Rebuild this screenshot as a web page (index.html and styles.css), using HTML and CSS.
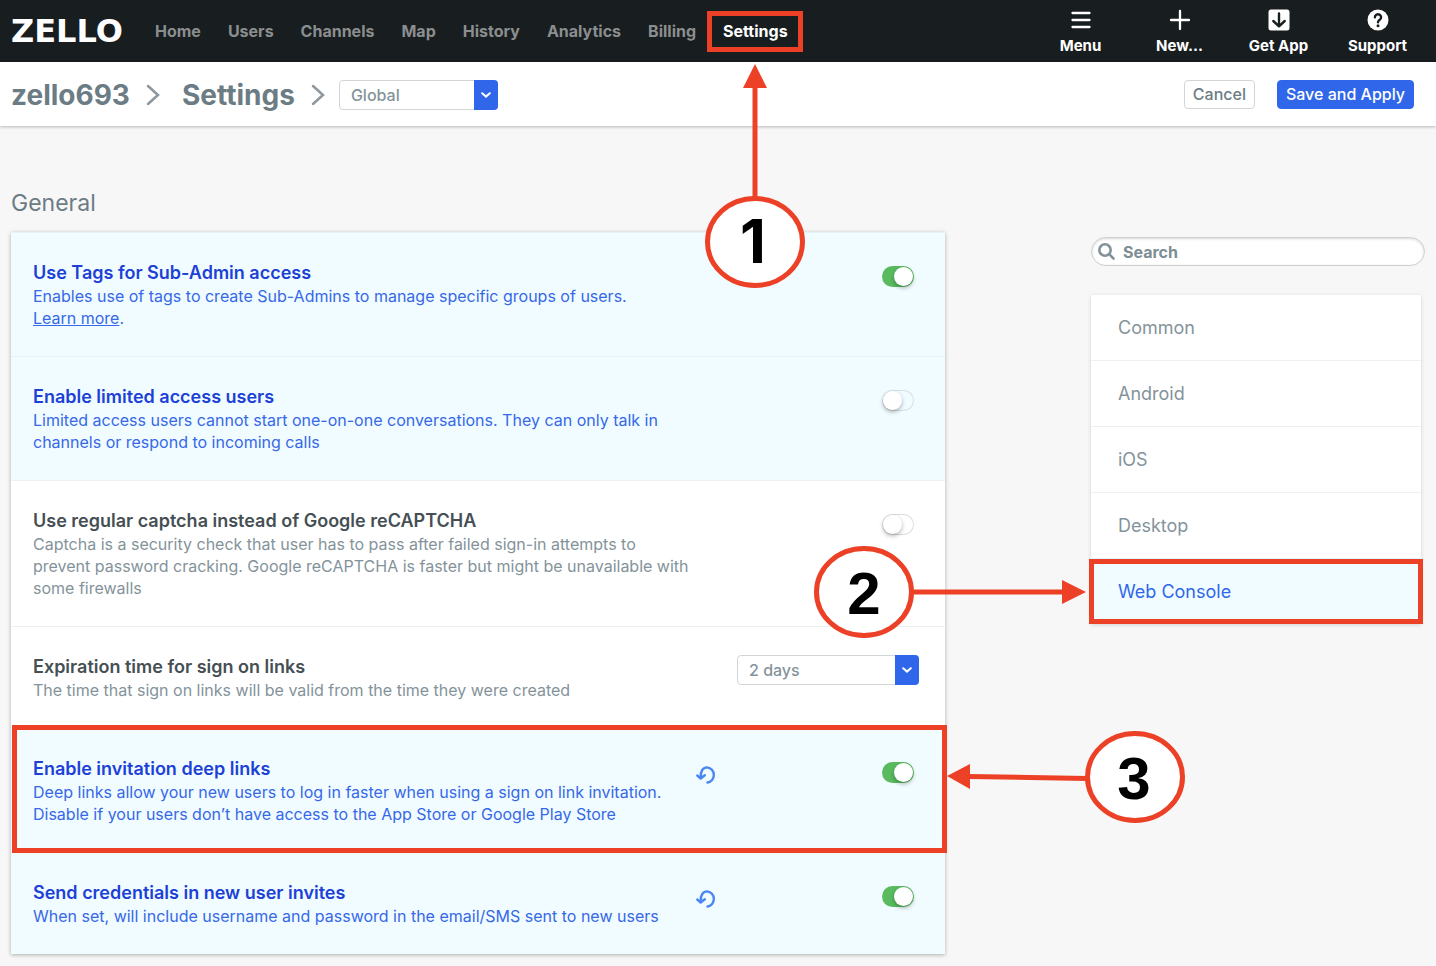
FILE: index.html
```html
<!DOCTYPE html>
<html lang="en">
<head>
    <meta charset="UTF-8">
    <meta name="viewport" content="width=device-width, initial-scale=1.0">
    <title>Zello - Settings</title>
    <link rel="stylesheet" href="styles.css">
</head>
<body>

<header class="topbar">
    <a class="logo" href="#">ZELLO</a>
    <nav class="main-nav">
        <ul>
            <li><a href="#">Home</a></li>
            <li><a href="#">Users</a></li>
            <li><a href="#">Channels</a></li>
            <li><a href="#">Map</a></li>
            <li><a href="#">History</a></li>
            <li><a href="#">Analytics</a></li>
            <li><a href="#">Billing</a></li>
            <li class="active">
                <a href="#">Settings</a>
                <div class="mark mark-nav">
                    <svg class="callout" width="102" height="238" viewBox="0 0 102 238">
                        <path class="head" d="M51 12 L63 36 L39 36 Z"/>
                        <path class="shaft" d="M51 35 V148"/>
                        <ellipse cx="51" cy="190" rx="47.500" ry="43.500"/>
                        <text class="one" x="49" y="211">1</text>
                    </svg>
                </div>
            </li>
        </ul>
    </nav>
    <nav class="tools">
        <a href="#">
            <svg width="22" height="22" viewBox="0 0 22 22"><path d="M2.500 4H19.500M2.500 11H19.500M2.500 18H19.500" stroke="#fff" stroke-width="2.300" stroke-linecap="round"/></svg>
            Menu
        </a>
        <a href="#">
            <svg width="22" height="22" viewBox="0 0 22 22"><path d="M2 11H20M11 2V20" stroke="#fff" stroke-width="2.300" stroke-linecap="round"/></svg>
            New...
        </a>
        <a href="#">
            <svg width="22" height="22" viewBox="0 0 22 22"><rect x="0.500" y="0.500" width="21" height="21" rx="2.500" fill="#fff"/><path d="M11 4.500V17M5.300 12L11 17.300L16.700 12" fill="none" stroke="#181d1f" stroke-width="2.400" stroke-linecap="round" stroke-linejoin="round"/></svg>
            Get App
        </a>
        <a href="#">
            <svg width="22" height="22" viewBox="0 0 22 22"><circle cx="11" cy="11" r="10.500" fill="#fff"/><path d="M7.900 8.400A3.100 3 0 1 1 12.700 10.800C11.500 11.600 11 12 11 13.300" fill="none" stroke="#181d1f" stroke-width="2.400" stroke-linecap="round"/><circle cx="11" cy="16.700" r="1.500" fill="#181d1f"/></svg>
            Support
        </a>
    </nav>
</header>

<div class="subheader">
    <div class="crumbs">
        <a href="#">zello693</a>
        <svg width="14" height="22" viewBox="0 0 14 22"><path d="M2 2L12 11L2 20"/></svg>
        <h1>Settings</h1>
        <svg width="14" height="22" viewBox="0 0 14 22"><path d="M2 2L12 11L2 20"/></svg>
        <div class="select scope">
            <select aria-label="Scope">
                <option>Global</option>
            </select>
            <span class="arrow"><svg width="10" height="6" viewBox="0 0 10 6"><path d="M1.200 1.200L5 4.600L8.800 1.200"/></svg></span>
        </div>
    </div>
    <div class="actions">
        <button class="btn" type="button">Cancel</button>
        <button class="btn primary" type="submit">Save and Apply</button>
    </div>
</div>

<main class="page">
    <section>
        <h2>General</h2>
        <div class="settings">
            <div class="row changed">
                <div class="info">
                    <label for="tags">Use Tags for Sub-Admin access</label>
                    <p>Enables use of tags to create Sub-Admins to manage specific groups of users. <a href="#">Learn&nbsp;more</a>.</p>
                </div>
                <div class="control"><input class="toggle" type="checkbox" id="tags" checked></div>
            </div>
            <div class="row changed">
                <div class="info">
                    <label for="limited">Enable limited access users</label>
                    <p>Limited access users cannot start one-on-one conversations. They can only talk in channels or respond to incoming calls</p>
                </div>
                <div class="control"><input class="toggle" type="checkbox" id="limited"></div>
            </div>
            <div class="row">
                <div class="info">
                    <label for="captcha">Use regular captcha instead of Google reCAPTCHA</label>
                    <p>Captcha is a security check that user has to pass after failed sign-in attempts to prevent password cracking. Google reCAPTCHA is faster but might be unavailable with some firewalls</p>
                </div>
                <div class="control"><input class="toggle" type="checkbox" id="captcha"></div>
            </div>
            <div class="row">
                <div class="info">
                    <label for="expiration">Expiration time for sign on links</label>
                    <p>The time that sign on links will be valid from the time they were created</p>
                </div>
                <div class="control">
                    <div class="select">
                        <select id="expiration">
                            <option>2 days</option>
                        </select>
                        <span class="arrow"><svg width="10" height="6" viewBox="0 0 10 6"><path d="M1.200 1.200L5 4.600L8.800 1.200"/></svg></span>
                    </div>
                </div>
            </div>
            <div class="row changed">
                <div class="info">
                    <label for="deeplinks">Enable invitation deep links</label>
                    <p>Deep links allow your new users to log in faster when using a sign on link invitation. Disable if your users don’t have access to the App Store or Google Play Store</p>
                </div>
                <button class="reset" type="button" aria-label="Reset to default">
                    <svg width="20" height="20" viewBox="0 0 20 20"><path d="M4.800 12C4.300 6 7 2.400 11.300 2.400A7.300 7.600 0 0 1 11.500 17.500"/><path d="M1.300 10.500L4.700 13.500L8.800 10.300"/></svg>
                </button>
                <div class="control"><input class="toggle" type="checkbox" id="deeplinks" checked></div>
                <div class="mark mark-row">
                    <svg class="callout" width="240" height="94" viewBox="0 0 240 94">
                        <path class="head" d="M0 46 L23 34 L23 59 Z"/>
                        <path class="shaft" d="M22 46.500 L140 48.500"/>
                        <ellipse cx="188" cy="47" rx="47.500" ry="43.500"/>
                        <text x="187" y="69">3</text>
                    </svg>
                </div>
            </div>
            <div class="row changed">
                <div class="info">
                    <label for="credentials">Send credentials in new user invites</label>
                    <p>When set, will include username and password in the email/SMS sent to new users</p>
                </div>
                <button class="reset" type="button" aria-label="Reset to default">
                    <svg width="20" height="20" viewBox="0 0 20 20"><path d="M4.800 12C4.300 6 7 2.400 11.300 2.400A7.300 7.600 0 0 1 11.500 17.500"/><path d="M1.300 10.500L4.700 13.500L8.800 10.300"/></svg>
                </button>
                <div class="control"><input class="toggle" type="checkbox" id="credentials" checked></div>
            </div>
        </div>
    </section>

    <aside class="sidebar">
        <label class="search">
            <svg width="17" height="17" viewBox="0 0 17 17"><circle cx="7" cy="7" r="5.700"/><path d="M11.200 11.200L15.500 15.500"/></svg>
            <input type="text" placeholder="Search" aria-label="Search">
        </label>
        <ul class="sections">
            <li><a href="#">Common</a></li>
            <li><a href="#">Android</a></li>
            <li><a href="#">iOS</a></li>
            <li><a href="#">Desktop</a></li>
            <li class="current">
                <a href="#">Web Console</a>
                <div class="mark mark-section">
                    <svg class="callout" width="276" height="94" viewBox="0 0 276 94">
                        <path class="shaft" d="M96 47 H250"/>
                        <path class="head" d="M272 47 L248 35 L248 59 Z"/>
                        <ellipse cx="50" cy="47" rx="47.500" ry="43.500"/>
                        <text x="50" y="69">2</text>
                    </svg>
                </div>
            </li>
        </ul>
    </aside>
</main>

</body>
</html>
```

FILE: styles.css
```css
* {
    box-sizing: border-box;
}
body {
    margin: 0;
    background-color: #f7f7f7;
    color: #6b7c85;
    font-family: Inter, "Liberation Sans", sans-serif;
    font-size: 16px;
}
ul {
    list-style: none;
    margin: 0;
    padding: 0;
}
a {
    color: inherit;
    text-decoration: none;
}

/* top bar */
.topbar {
    display: flex;
    align-items: center;
    height: 62px;
    padding: 0 9px 0 11px;
    background-color: #181d1f;
    color: white;
}
.logo {
    width: 114px;
    margin-right: 30px;
    font-family: "DejaVu Sans", sans-serif;
    font-size: 32px;
    font-weight: bold;
    line-height: 40px;
}
.main-nav ul {
    display: flex;
    gap: 27px;
}
.main-nav li {
    position: relative;
    color: #8b8e8f;
    font-weight: 700;
    line-height: 18px;
}
.main-nav .active {
    color: white;
}
.tools {
    display: flex;
    margin-left: auto;
}
.tools a {
    display: flex;
    flex-direction: column;
    align-items: center;
    gap: 6px;
    width: 99px;
    padding-top: 2px;
    font-size: 15px;
    font-weight: 700;
    line-height: 18px;
}

/* breadcrumbs and page actions */
.subheader {
    display: flex;
    align-items: center;
    justify-content: space-between;
    height: 64px;
    padding: 0 22px 0 11px;
    background-color: white;
    box-shadow: 0 1px 3px rgba(0, 0, 0, 0.25);
}
.crumbs {
    display: flex;
    align-items: center;
    padding-top: 2px;
    font-size: 28px;
    font-weight: 700;
}
.crumbs h1 {
    margin: 0;
    font-size: 28px;
    font-weight: 700;
}
.crumbs > svg {
    margin: 0 22px 0 16px;
    fill: none;
    stroke: #8d979d;
    stroke-width: 2.5;
    stroke-linecap: round;
}
.crumbs h1 + svg {
    margin-right: 14px;
}
.select {
    position: relative;
    width: 182px;
}
.select.scope {
    width: 159px;
}
.select select {
    appearance: none;
    display: block;
    width: 100%;
    height: 30px;
    padding: 0 34px 0 11px;
    border: 1px solid #d3d6d8;
    border-radius: 4px;
    background-color: white;
    color: #84939a;
    font-family: inherit;
    font-size: 16px;
    font-weight: 500;
}
.arrow {
    position: absolute;
    top: 0;
    right: 0;
    bottom: 0;
    display: flex;
    align-items: center;
    justify-content: center;
    width: 24px;
    border-radius: 0 4px 4px 0;
    background-color: #3067ea;
    pointer-events: none;
}
.arrow svg {
    fill: none;
    stroke: white;
    stroke-width: 2;
    stroke-linecap: round;
}
.actions {
    display: flex;
    gap: 22px;
}
.btn {
    height: 29px;
    padding: 0 8px;
    border: 1px solid #d3d6d8;
    border-radius: 4px;
    background-color: white;
    color: #6b7c85;
    font-family: inherit;
    font-size: 16px;
    font-weight: 500;
    cursor: pointer;
}
.btn.primary {
    border-color: #3067ea;
    background-color: #3067ea;
    color: white;
}

/* page */
.page {
    display: grid;
    grid-template-columns: minmax(0, 1fr) 334px;
    gap: 146px;
    padding: 61px 11px 12px;
}
h2 {
    margin: 0 0 13px;
    font-size: 23px;
    font-weight: 400;
    line-height: 32px;
}
.settings {
    background-color: white;
    box-shadow: 0 1px 4px rgba(0, 0, 0, 0.3);
}
.row {
    position: relative;
    display: flex;
    align-items: flex-start;
    padding: 28px 26px 27px 22px;
    border-top: 1px solid #eff0f1;
}
.row.changed {
    border-top-color: #e3f4fd;
    background-color: #f0fcff;
}
.info {
    flex: 1;
}
.info label {
    display: block;
    color: #454f54;
    font-size: 18px;
    font-weight: 600;
    line-height: 24px;
}
.info p {
    margin: 0;
    color: #84939a;
    line-height: 22px;
}
.info a {
    text-decoration: underline;
}
.changed label {
    color: #1d41d6;
}
.changed p {
    color: #3768e8;
}
.control {
    display: flex;
    justify-content: flex-end;
    width: 182px;
}
.info + .control {
    margin-left: 44px;
}
.reset {
    width: 20px;
    height: 20px;
    margin: 8px 21px 0 3px;
    padding: 0;
    border: none;
    background: none;
    cursor: pointer;
}
.reset svg {
    display: block;
    fill: none;
    stroke: #4a86f5;
    stroke-width: 2.4;
    stroke-linecap: round;
    stroke-linejoin: round;
}
.toggle {
    appearance: none;
    width: 32px;
    height: 21px;
    margin: 5px 5px 0 0;
    padding: 1px;
    border-radius: 11px;
    box-shadow: inset 0 0 0 1px #d9dfe1;
    cursor: pointer;
}
.toggle::before {
    content: "";
    display: block;
    width: 19px;
    height: 19px;
    border-radius: 50%;
    background-color: white;
    box-shadow: 0 2px 4px rgba(0, 0, 0, 0.3);
}
.toggle:checked {
    background-color: #59bb5e;
    box-shadow: none;
}
.toggle:checked::before {
    margin-left: 11px;
}

/* sidebar */
.sidebar {
    padding-top: 50px;
}
.search {
    display: flex;
    align-items: center;
    height: 29px;
    padding: 0 6px;
    border: 1px solid #cccfd0;
    border-radius: 15px;
    background-color: white;
    box-shadow: inset 0 1px 3px rgba(0, 0, 0, 0.15);
}
.search svg {
    fill: none;
    stroke: #84939a;
    stroke-width: 2.6;
    stroke-linecap: round;
}
.search input {
    flex: 1;
    min-width: 0;
    margin-left: 8px;
    padding: 0;
    border: none;
    outline: none;
    background: none;
    font-family: inherit;
    font-size: 16px;
    font-weight: 700;
}
.search input::placeholder {
    color: #7d8d94;
    opacity: 1;
}
.sections {
    margin: 29px 4px 0 0;
    background-color: white;
    box-shadow: 0 1px 4px rgba(0, 0, 0, 0.15);
    font-size: 18px;
    color: #84939a;
}
.sections li {
    position: relative;
}
.sections li + li {
    border-top: 1px solid #eff0f1;
}
.sections a {
    display: block;
    padding: 0 27px;
    line-height: 65px;
}
.sections .current {
    border-top-color: #e3f4fd;
    background-color: #f0fcff;
    color: #3067ea;
}

/* tutorial marks drawn over the page */
.mark {
    position: absolute;
    z-index: 2;
    border: 5px solid #ec4127;
    pointer-events: none;
}
.mark-nav {
    inset: -11px -15px -12px -16px;
}
.mark-section {
    inset: 0 -2px;
}
.mark-row {
    inset: -4px -2px -1px 1px;
}
.callout {
    position: absolute;
}
.mark-nav .callout {
    top: 100%;
    left: 50%;
    margin: 5px 0 0 -51px;
}
.mark-section .callout {
    top: 50%;
    right: 100%;
    margin: -47px 4px 0 0;
}
.mark-row .callout {
    top: 0;
    left: 100%;
    margin-left: 5px;
}
.callout .head {
    fill: #ec4127;
}
.callout .shaft {
    stroke: #ec4127;
    stroke-width: 5;
}
.callout ellipse {
    fill: white;
    stroke: #ec4127;
    stroke-width: 5;
}
.callout text {
    fill: black;
    font-family: "Liberation Sans", Arial, sans-serif;
    font-size: 60px;
    font-weight: bold;
    text-anchor: middle;
}
.callout .one {
    font-family: Inter, sans-serif;
}
```
